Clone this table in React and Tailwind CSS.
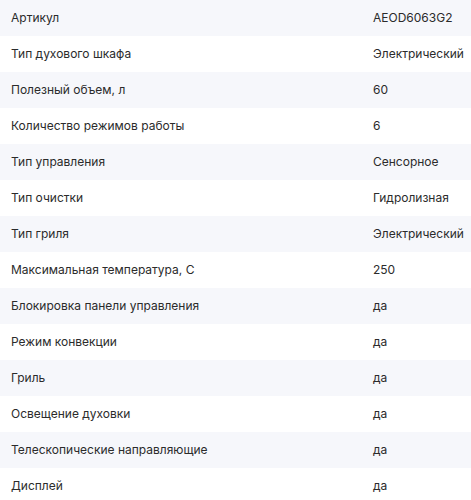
const specs = [
  ["Артикул", "AEOD6063G2"],
  ["Тип духового шкафа", "Электрический"],
  ["Полезный объем, л", "60"],
  ["Количество режимов работы", "6"],
  ["Тип управления", "Сенсорное"],
  ["Тип очистки", "Гидролизная"],
  ["Тип гриля", "Электрический"],
  ["Максимальная температура, С", "250"],
  ["Блокировка панели управления", "да"],
  ["Режим конвекции", "да"],
  ["Гриль", "да"],
  ["Освещение духовки", "да"],
  ["Телескопические направляющие", "да"],
  ["Дисплей", "да"],
];

export default function App() {
  return (
    <div className="w-[471px] bg-white font-['Inter',sans-serif] text-[12px] text-[#2b2b2b]">
      {specs.map(([label, value], i) => (
        <div
          key={label}
          className={`flex h-[36px] items-center ${i % 2 === 0 ? "bg-[#f6f7fb]" : "bg-white"}`}
        >
          <span className="pl-[11px] w-[373px] shrink-0">{label}</span>
          <span>{value}</span>
        </div>
      ))}
    </div>
  );
}
